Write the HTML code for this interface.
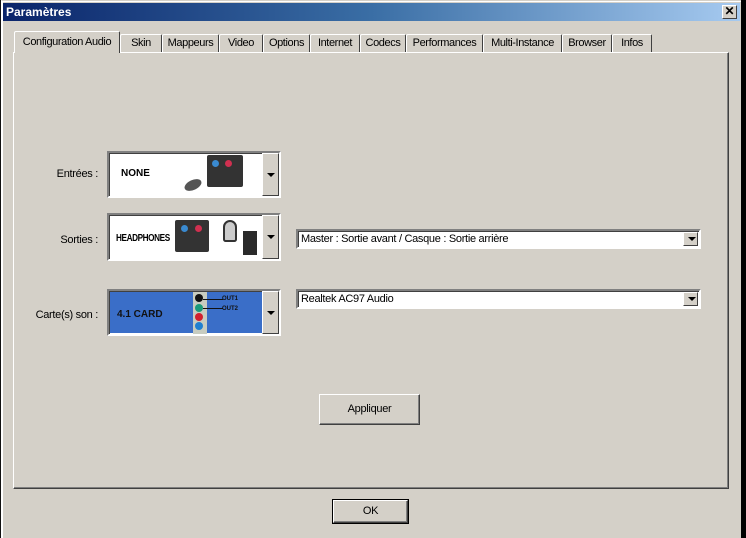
<!DOCTYPE html>
<html><head><style>
*{margin:0;padding:0;box-sizing:border-box}
body{width:746px;height:538px;background:#111;position:relative;overflow:hidden;font-family:"Liberation Sans",sans-serif;font-size:11px;color:#000}
.a{position:absolute;white-space:nowrap}
#win{left:1px;top:0;width:740px;height:538px;background:#d4d0c8;border-left:1px solid #fff;border-top:1px solid #d4d0c8;box-shadow:inset 1px 1px 0 #fff}
#title{left:3px;top:3px;width:737px;height:18px;background:linear-gradient(to right,#0a246a,#3a6ea5 50%,#a6caf0);color:#fff;font-weight:bold;font-size:12px;line-height:18px;padding-left:3px}
#close{left:722px;top:5px;width:15px;height:14px;background:#d4d0c8;border:1px solid;border-color:#fff #404040 #404040 #fff;font-size:12px;font-weight:bold;line-height:11px;text-align:center}
.tab{top:34px;height:19px;border:1px solid;border-color:#fff #404040 transparent #fff;border-bottom:none;background:#d4d0c8;font-size:11px;letter-spacing:-0.4px;line-height:17px;text-align:center;border-radius:2px 2px 0 0}
.tab.on{top:31px;height:22px;z-index:2;line-height:20px}
#panel{left:13px;top:52px;width:716px;height:437px;border:1px solid;border-color:#fff #404040 #404040 #fff;box-shadow:inset -1px -1px 0 #808080}
.lbl{font-size:11px;letter-spacing:-0.3px;text-align:right;width:90px}
.pic{left:107px;width:174px;border:2px solid;border-color:#808080 #fff #fff #808080;background:#fff;box-shadow:inset 1px 1px 0 #404040}
.arr{right:0;top:0;bottom:0;width:17px;background:#d4d0c8;border:1px solid;border-color:#fff #404040 #404040 #fff}
.arr:after{content:"";position:absolute;left:4px;top:50%;margin-top:-2px;border:4px solid transparent;border-top:4px solid #000;border-bottom:0}
.combo{left:296px;width:405px;height:20px;background:#fff;border:2px solid;border-color:#808080 #fff #fff #808080;box-shadow:inset 1px 1px 0 #404040;font-size:11px;letter-spacing:-0.3px;line-height:16px;padding-left:3px}
.combo .arr{top:1px;right:1px;bottom:1px;width:15px}
.btn{background:#d4d0c8;border:1px solid;border-color:#fff #404040 #404040 #fff;box-shadow:inset -1px -1px 0 #808080;font-size:11px;letter-spacing:-0.3px;text-align:center}
.lap{background:#333;border-radius:2px}
</style></head><body>
<div class="a" style="left:741px;top:0;width:5px;height:538px;background:#000"></div>
<div id="win" class="a"></div>
<div id="title" class="a">Paramètres</div>
<div id="close" class="a">✕</div>

<div class="tab a on" style="left:14px;width:106px">Configuration Audio</div>
<div class="tab a" style="left:120px;width:42px">Skin</div>
<div class="tab a" style="left:162px;width:57px">Mappeurs</div>
<div class="tab a" style="left:219px;width:44px">Video</div>
<div class="tab a" style="left:263px;width:47px">Options</div>
<div class="tab a" style="left:310px;width:50px">Internet</div>
<div class="tab a" style="left:360px;width:46px">Codecs</div>
<div class="tab a" style="left:406px;width:77px">Performances</div>
<div class="tab a" style="left:483px;width:79px">Multi-Instance</div>
<div class="tab a" style="left:562px;width:50px">Browser</div>
<div class="tab a" style="left:612px;width:40px">Infos</div>

<div id="panel" class="a"></div>

<div class="a lbl" style="left:8px;top:168px">Entrées :</div>
<div class="a pic" style="top:151px;height:47px">
 <div class="a" style="left:12px;top:15px;font-weight:bold;font-size:10px">NONE</div>
 <div class="a lap" style="left:98px;top:2px;width:36px;height:32px"></div>
 <div class="a" style="left:103px;top:7px;width:7px;height:7px;border-radius:50%;background:#3a8ad0"></div>
 <div class="a" style="left:116px;top:7px;width:7px;height:7px;border-radius:50%;background:#d03050"></div>
 <div class="a" style="left:75px;top:27px;width:18px;height:10px;border-radius:50%;background:#555;transform:rotate(-25deg)"></div>
 <div class="a arr"></div>
</div>

<div class="a lbl" style="left:8px;top:234px">Sorties :</div>
<div class="a pic" style="top:213px;height:48px">
 <div class="a" style="left:7px;top:18px;font-weight:bold;font-size:10px;letter-spacing:-0.5px;transform:scaleX(0.82);transform-origin:left">HEADPHONES</div>
 <div class="a lap" style="left:66px;top:5px;width:34px;height:32px"></div>
 <div class="a" style="left:72px;top:10px;width:7px;height:7px;border-radius:50%;background:#3a8ad0"></div>
 <div class="a" style="left:86px;top:10px;width:7px;height:7px;border-radius:50%;background:#d03050"></div>
 <div class="a" style="left:114px;top:5px;width:14px;height:22px;border:2px solid #333;border-radius:8px 8px 3px 3px;background:#ccc"></div>
 <div class="a" style="left:134px;top:16px;width:14px;height:24px;background:#2a2a2a"></div>
 <div class="a arr"></div>
</div>
<div class="a combo" style="top:229px">Master : Sortie avant / Casque : Sortie arrière<div class="a arr"></div></div>

<div class="a lbl" style="left:8px;top:309px">Carte(s) son :</div>
<div class="a pic" style="top:289px;height:47px;background:#fff">
 <div class="a" style="left:1px;top:1px;right:17px;bottom:1px;background:#3a6ec8"></div>
 <div class="a" style="left:8px;top:18px;font-weight:bold;font-size:10px;color:#111">4.1 CARD</div>
 <div class="a" style="left:84px;top:1px;width:14px;height:42px;background:#c8ccc0"></div>
 <div class="a" style="left:86px;top:3px;width:8px;height:8px;border-radius:50%;background:#111"></div>
 <div class="a" style="left:86px;top:13px;width:8px;height:8px;border-radius:50%;background:#1a9a7a"></div>
 <div class="a" style="left:86px;top:22px;width:8px;height:8px;border-radius:50%;background:#d02030"></div>
 <div class="a" style="left:86px;top:31px;width:8px;height:8px;border-radius:50%;background:#2080d0"></div>
 <div class="a" style="left:94px;top:8px;width:20px;height:1px;background:#111"></div>
 <div class="a" style="left:94px;top:17px;width:20px;height:1px;background:#111"></div>
 <div class="a" style="left:113px;top:5px;font-size:6px;font-weight:bold;color:#111">OUT1</div>
 <div class="a" style="left:113px;top:15px;font-size:6px;font-weight:bold;color:#111">OUT2</div>
 <div class="a arr"></div>
</div>
<div class="a combo" style="top:289px">Realtek AC97 Audio<div class="a arr"></div></div>

<div class="a btn" style="left:319px;top:394px;width:101px;height:31px;line-height:29px">Appliquer</div>
<div class="a btn" style="left:333px;top:500px;width:75px;height:23px;line-height:21px;outline:1px solid #000">OK</div>
</body></html>
